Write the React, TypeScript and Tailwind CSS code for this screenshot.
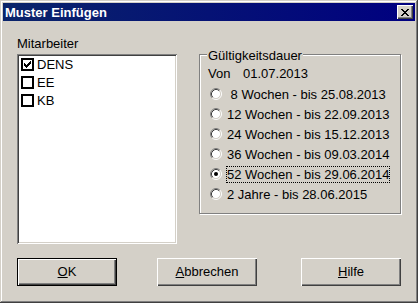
const ITEMS = [
  { name: "DENS", checked: true },
  { name: "EE", checked: false },
  { name: "KB", checked: false },
];

const OPTIONS = [
  { label: " 8 Wochen - bis 25.08.2013", selected: false },
  { label: "12 Wochen - bis 22.09.2013", selected: false },
  { label: "24 Wochen - bis 15.12.2013", selected: false },
  { label: "36 Wochen - bis 09.03.2014", selected: false },
  { label: "52 Wochen - bis 29.06.2014", selected: true },
  { label: "2 Jahre - bis 28.06.2015", selected: false },
];

// classic 3D bevels
const RAISED = "shadow-[inset_1px_1px_#ffffff,inset_-1px_-1px_#404040,inset_-2px_-2px_#808080]";

function CloseGlyph() {
  return (
    <svg width="8" height="7" viewBox="0 0 8 7" shapeRendering="crispEdges">
      <path
        d="M0 0h2v1H0zM6 0h2v1H6zM1 1h2v1H1zM5 1h2v1H5zM2 2h4v1H2zM3 3h2v1H3zM2 4h4v1H2zM1 5h2v1H1zM5 5h2v1H5zM0 6h2v1H0zM6 6h2v1H6z"
        fill="#000"
      />
    </svg>
  );
}

function Check() {
  return (
    <svg width="7" height="7" viewBox="0 0 7 7" shapeRendering="crispEdges">
      <path
        d="M6 0h1v1H6zM5 1h2v1H5zM0 2h1v1H0zM4 2h3v1H4zM0 3h2v1H0zM3 3h3v1H3zM0 4h5v1H0zM1 5h3v1H1zM2 6h1v1H2z"
        fill="#000"
      />
    </svg>
  );
}

function Radio({ on }: { on: boolean }) {
  return (
    <svg width="12" height="12" viewBox="0 0 12 12" className="shrink-0">
      <circle cx="6" cy="6" r="4.5" fill="#fff" />
      <path d="M2.11 9.89A5.5 5.5 0 0 1 9.89 2.11" fill="none" stroke="#808080" />
      <path d="M9.89 2.11A5.5 5.5 0 0 1 2.11 9.89" fill="none" stroke="#fff" />
      <path d="M2.82 9.18A4.5 4.5 0 0 1 9.18 2.82" fill="none" stroke="#404040" />
      <path d="M9.18 2.82A4.5 4.5 0 0 1 2.82 9.18" fill="none" stroke="#d4d0c8" />
      {on && <circle cx="6" cy="6" r="2" fill="#000" />}
    </svg>
  );
}

function Button({ children, isDefault }: { children: React.ReactNode; isDefault?: boolean }) {
  return (
    <div
      className={`w-[100px] h-[28px] flex items-center justify-center bg-[#d4d0c8] text-[13px] text-black ${RAISED} ${
        isDefault ? "border border-black" : ""
      }`}
    >
      {children}
    </div>
  );
}

export default function App() {
  return (
    <div className="w-[418px] h-[303px] bg-[#d4d0c8] p-[3px] font-[Liberation_Sans,Arial,sans-serif] text-black shadow-[inset_-1px_-1px_#404040,inset_1px_1px_#d4d0c8,inset_-2px_-2px_#808080,inset_2px_2px_#ffffff]">
      {/* Title bar */}
      <div className="h-[18px] flex items-center justify-between pl-[2px] pr-[2px] bg-[linear-gradient(to_right,#0a246a,#000080)]">
        <span className="text-white text-[13px] font-bold leading-none">Muster Einfügen</span>
        <div className={`w-[16px] h-[14px] flex items-center justify-center bg-[#d4d0c8] ${RAISED}`}>
          <CloseGlyph />
        </div>
      </div>

      <div className="px-[14px] pt-[15px]">
        <div className="flex items-start">
          {/* Mitarbeiter */}
          <div className="w-[160px] flex flex-col">
            <div className="h-[15px] leading-[15px] text-[13px] mb-[3px]">Mitarbeiter</div>
            <div className="h-[190px] bg-white p-[2px] shadow-[inset_1px_1px_#808080,inset_-1px_-1px_#ffffff,inset_2px_2px_#404040,inset_-2px_-2px_#d4d0c8]">
              {ITEMS.map((it) => (
                <div key={it.name} className="h-[18px] flex items-start pl-[2px] gap-[3px]">
                  <div className="mt-[2px] w-[13px] h-[13px] border-2 border-black bg-white flex items-center justify-center">
                    {it.checked && <Check />}
                  </div>
                  <span className="text-[13px] leading-[18px]">{it.name}</span>
                </div>
              ))}
            </div>
          </div>

          {/* Gültigkeitsdauer */}
          <div className="ml-[22px] mt-[18px] relative w-[202px] h-[160px] border border-[#808080] shadow-[1px_1px_0_#ffffff,inset_1px_1px_0_#ffffff] pl-[10px] pt-[11px]">
            <span className="absolute -top-[7px] left-[7px] px-[1px] bg-[#d4d0c8] text-[13px] leading-[15px]">
              Gültigkeitsdauer
            </span>
            <div className="-ml-[2px] flex text-[13px] leading-[15px]">
              <span className="w-[35px]">Von</span>
              <span>01.07.2013</span>
            </div>
            <div className="mt-[3px] flex flex-col">
              {OPTIONS.map((o) => (
                <div key={o.label} className="h-[20px] flex items-center gap-[4px]">
                  <Radio on={o.selected} />
                  <span
                    className={`whitespace-pre text-[13px] leading-[15px] border ${
                      o.selected ? "border-dotted border-black" : "border-transparent"
                    }`}
                  >
                    {o.label}
                  </span>
                </div>
              ))}
            </div>
          </div>
        </div>

        {/* Buttons */}
        <div className="mt-[14px] flex">
          <Button isDefault>
            <span><u>O</u>K</span>
          </Button>
          <div className="ml-[40px]">
            <Button>
              <span><u>A</u>bbrechen</span>
            </Button>
          </div>
          <div className="ml-[44px]">
            <Button>
              <span><u>H</u>ilfe</span>
            </Button>
          </div>
        </div>
      </div>
    </div>
  );
}
